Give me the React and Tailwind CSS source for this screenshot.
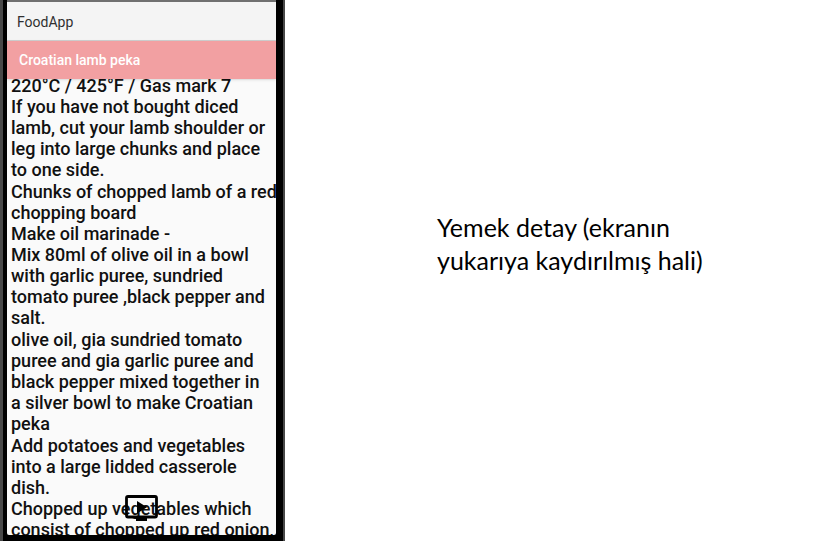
const sections = [
  [
    ['220°C / 425°F / Gas mark 7'],
    ['If you have not bought diced', 'lamb, cut your lamb shoulder or', 'leg into large chunks and place', 'to one side.'],
  ],
  [
    ['Chunks of chopped lamb of a red', 'chopping board'],
    ['Make oil marinade -'],
    ['Mix 80ml of olive oil in a bowl', 'with garlic puree, sundried', 'tomato puree ,black pepper and', 'salt.'],
  ],
  [['olive oil, gia sundried tomato', 'puree and gia garlic puree and', 'black pepper mixed together in', 'a silver bowl to make Croatian', 'peka']],
  [
    ['Add potatoes and vegetables', 'into a large lidded casserole', 'dish.'],
    ['Chopped up vegetables which', 'consist of chopped up red onion,'],
  ],
];

function VideoIcon() {
  return (
    <svg viewBox="0 0 36 28" className="h-7 w-9" aria-hidden="true">
      <rect x="2.5" y="1.5" width="30" height="20.5" rx="1.5" fill="none" stroke="#000" strokeWidth="2.8" />
      <path d="M13 6v12.5l10-6.3z" fill="#000" />
      <path d="M12 22h11v4H12z" fill="#000" />
    </svg>
  );
}

function Phone() {
  return (
    <div className="flex w-[285px] shrink-0 border-l-3 border-r-2 border-[#484848] bg-black pr-[7px] pb-1.5 pl-1">
      <div className="relative flex min-w-0 flex-1 flex-col overflow-hidden rounded-b-xs border-t-2 border-[#707070] bg-[#fafafa] font-['Roboto',sans-serif]">
        <header className="flex h-[39px] shrink-0 items-center border-b border-[#cfcfcf] bg-[#f4f4f4] pt-0.5 pl-2.5 text-sm text-[#303030]">
          FoodApp
        </header>
        <h1 className="z-10 flex h-[38px] shrink-0 items-center bg-[#f2a0a2] pl-3 text-sm font-medium text-white shadow-sm">
          Croatian lamb peka
        </h1>
        <main className="-mt-1 flex min-h-0 flex-1 flex-col gap-px overflow-hidden pl-1 text-[18px] leading-[21px] font-medium whitespace-nowrap text-[#111]">
          {sections.map((section, i) => (
            <section key={i}>
              {section.map((lines) => (
                <p key={lines[0]}>
                  {lines.map((line) => (
                    <span key={line} className="block">{line}</span>
                  ))}
                </p>
              ))}
            </section>
          ))}
        </main>
        <button type="button" aria-label="Watch video" className="absolute bottom-3 left-1/2 -translate-x-1/2">
          <VideoIcon />
        </button>
      </div>
    </div>
  );
}

export default function App() {
  return (
    <div className="flex h-screen overflow-hidden bg-white">
      <Phone />
      <aside className="flex flex-1 items-start pt-[211px] pl-[152px]">
        <p className="font-['Lato',sans-serif] text-[25px] leading-[33px] whitespace-nowrap text-black">
          Yemek detay (ekranın
          <br />
          yukarıya kaydırılmış hali)
        </p>
      </aside>
    </div>
  );
}
